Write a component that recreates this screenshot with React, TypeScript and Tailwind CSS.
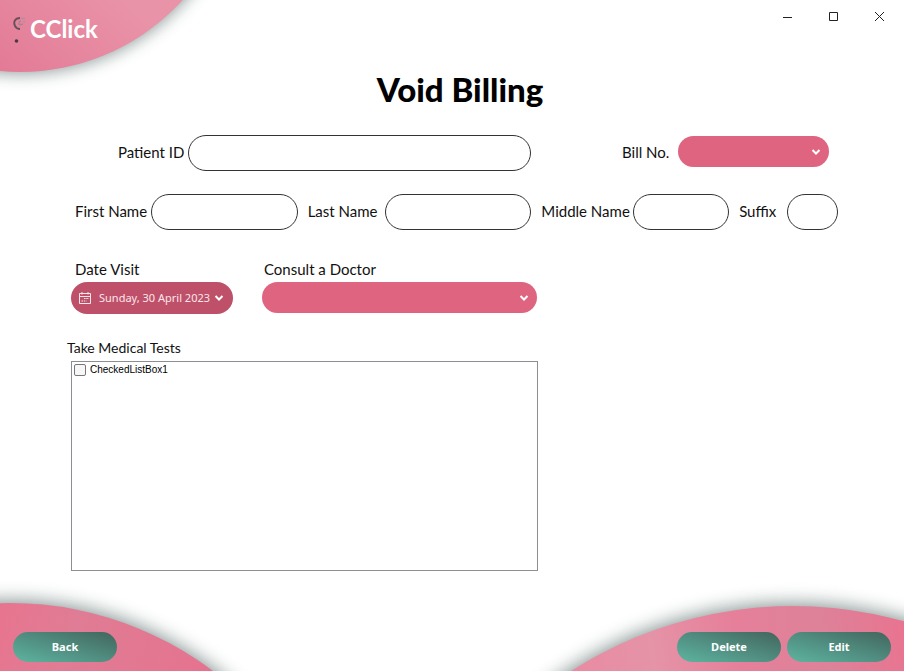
import React from "react";

const field =
  "block h-9 w-full rounded-full border border-[#333] bg-white px-3 text-[15px] outline-none";
const rowLabel = "shrink-0 whitespace-nowrap text-[15px] leading-[34px]";
const topLabel = "mb-0.5 block whitespace-nowrap text-[15px] leading-[22px]";

function Chevron({ className = "" }: { className?: string }) {
  return (
    <svg
      className={className}
      width="10"
      height="8"
      viewBox="0 0 10 8"
      fill="none"
      stroke="white"
      strokeWidth="2"
      aria-hidden="true"
    >
      <path d="M1.5 2 L5 5.5 L8.5 2" />
    </svg>
  );
}

function TextField({ id, className }: { id: string; className: string }) {
  return (
    <div className={`w-0 min-w-0 ${className}`}>
      <input id={id} type="text" className={field} />
    </div>
  );
}

function PinkSelect({ id, className }: { id: string; className: string }) {
  return (
    <div className={`relative min-w-0 ${className}`}>
      <select
        id={id}
        className="block h-[31px] w-full appearance-none rounded-full bg-[#de6480] px-4 text-sm text-white outline-none"
      />
      <Chevron className="pointer-events-none absolute right-2 top-3" />
    </div>
  );
}

function Decorations() {
  return (
    <>
      <svg
        className="pointer-events-none absolute left-0 top-0"
        width="280"
        height="140"
        aria-hidden="true"
      >
        <defs>
          <linearGradient id="topPink" gradientUnits="userSpaceOnUse" x1="0" y1="72" x2="90" y2="-30">
            <stop offset="0" stopColor="#e37a96" />
            <stop offset="1" stopColor="#e993a8" />
          </linearGradient>
          <filter id="softTop" x="-20%" y="-20%" width="140%" height="140%">
            <feGaussianBlur stdDeviation="8" />
          </filter>
        </defs>
        <circle cx="20" cy="-147" r="221" fill="#4d625e" opacity="0.6" filter="url(#softTop)" />
        <circle cx="20" cy="-148" r="220" fill="url(#topPink)" />
      </svg>
      <svg
        className="pointer-events-none absolute bottom-0 left-0"
        width="280"
        height="120"
        viewBox="0 551 280 120"
        aria-hidden="true"
      >
        <defs>
          <linearGradient
            id="leftPink"
            gradientUnits="userSpaceOnUse"
            x1="0"
            y1="600"
            x2="210"
            y2="671"
          >
            <stop offset="0" stopColor="#e8748f" />
            <stop offset="0.35" stopColor="#e07c95" />
            <stop offset="1" stopColor="#e5738f" />
          </linearGradient>
          <filter id="softLeft" x="-20%" y="-20%" width="140%" height="140%">
            <feGaussianBlur stdDeviation="9" />
          </filter>
        </defs>
        <circle cx="10" cy="938" r="338" fill="#4d625e" opacity="0.65" filter="url(#softLeft)" />
        <circle cx="10" cy="940" r="337" fill="url(#leftPink)" />
      </svg>
      <svg
        className="pointer-events-none absolute bottom-0 right-0"
        width="400"
        height="120"
        viewBox="504 551 400 120"
        aria-hidden="true"
      >
        <defs>
          <linearGradient
            id="rightPink"
            gradientUnits="userSpaceOnUse"
            x1="570"
            y1="671"
            x2="904"
            y2="606"
          >
            <stop offset="0" stopColor="#e98ba2" />
            <stop offset="0.25" stopColor="#e593a7" />
            <stop offset="0.5" stopColor="#e67f9a" />
            <stop offset="0.75" stopColor="#dd8299" />
            <stop offset="1" stopColor="#e97390" />
          </linearGradient>
          <filter id="softRight" x="-20%" y="-20%" width="140%" height="140%">
            <feGaussianBlur stdDeviation="9" />
          </filter>
        </defs>
        <circle cx="793" cy="1015" r="412" fill="#4d625e" opacity="0.65" filter="url(#softRight)" />
        <circle cx="793" cy="1017" r="411" fill="url(#rightPink)" />
      </svg>
    </>
  );
}

function WindowButton({ label, children }: { label: string; children: React.ReactNode }) {
  return (
    <button type="button" aria-label={label} className="flex h-8 w-[46px] items-center justify-center">
      <svg
        width="11"
        height="11"
        viewBox="0 0 11 11"
        fill="none"
        stroke="#222"
        strokeWidth="1"
        aria-hidden="true"
      >
        {children}
      </svg>
    </button>
  );
}

function ActionButton({ children }: { children: React.ReactNode }) {
  return (
    <button
      type="button"
      className="h-[30px] w-[104px] rounded-full bg-linear-to-tr from-[#5db5a0] via-[#508d80] to-[#42655d] font-['Noto_Sans',sans-serif] text-[11px] font-bold text-white"
    >
      {children}
    </button>
  );
}

export default function App() {
  return (
    <div className="relative flex min-h-screen flex-col overflow-hidden bg-white font-['Lato',sans-serif] text-[#111]">
      <Decorations />

      <header className="relative flex items-start justify-between pr-0.5">
        <div className="flex items-center gap-1 pl-3 pt-[13px]">
          <svg width="14" height="28" viewBox="0 0 14 28" fill="none" aria-hidden="true">
            <path d="M8 3 C3 3 1 7 3 11 C4 13 6 14 8 14" stroke="#67505a" strokeWidth="1.8" />
            <path d="M9 6 C7 6 6 9 8 10 L11 9" stroke="#a68790" strokeWidth="1.4" />
            <path d="M9 3 L13 4 M12 6 L12 8" stroke="#b98e9b" strokeWidth="1.6" />
            <circle cx="4.500" cy="26" r="1.800" fill="#4b3940" />
          </svg>
          <span className="text-2xl font-bold leading-8 text-white">CClick</span>
        </div>
        <div className="flex">
          <WindowButton label="Minimize">
            <path d="M1 6.500 H10" />
          </WindowButton>
          <WindowButton label="Maximize">
            <path d="M1.500 1.500 H9.500 V9.500 H1.500 Z" />
          </WindowButton>
          <WindowButton label="Close">
            <path d="M1 1 L10 10 M10 1 L1 10" />
          </WindowButton>
        </div>
      </header>

      <main className="relative flex grow flex-col pt-6">
        <h1 className="pl-4 text-center text-[33px] font-black leading-10 text-black">
          Void Billing
        </h1>

        <form className="flex flex-col pl-[71px] pr-[66px] pt-[26px]">
          <div className="flex items-start pl-[47px] pr-[9px]">
            <label htmlFor="patient" className={`${rowLabel} w-[70px]`}>
              Patient ID
            </label>
            <TextField id="patient" className="grow-[343]" />
            <label htmlFor="bill" className={`${rowLabel} ml-[91px] w-14`}>
              Bill No.
            </label>
            <PinkSelect id="bill" className="mt-px w-0 grow-[151]" />
          </div>

          <div className="mt-[23px] flex items-start pl-1">
            <label htmlFor="first" className={`${rowLabel} w-[76px]`}>
              First Name
            </label>
            <TextField id="first" className="grow-[147]" />
            <label htmlFor="last" className={`${rowLabel} ml-2.5 w-[77px]`}>
              Last Name
            </label>
            <TextField id="last" className="grow-[147]" />
            <label htmlFor="middle" className={`${rowLabel} ml-2.5 w-[92px]`}>
              Middle Name
            </label>
            <TextField id="middle" className="grow-[96]" />
            <label htmlFor="suffix" className={`${rowLabel} ml-2.5 w-12`}>
              Suffix
            </label>
            <TextField id="suffix" className="grow-[51]" />
          </div>

          <div className="mt-7 flex gap-[29px]">
            <div>
              <label htmlFor="visit" className={`${topLabel} pl-1`}>
                Date Visit
              </label>
              <button
                id="visit"
                type="button"
                className="flex h-8 w-[162px] items-center rounded-full bg-[#bf5069] pl-2 font-['Noto_Sans',sans-serif] text-[11px] text-[#fbe6eb]"
              >
                <svg
                  width="12"
                  height="12"
                  viewBox="0 0 12 12"
                  fill="none"
                  stroke="currentColor"
                  aria-hidden="true"
                >
                  <path d="M0.500 1.500 H11.500 V11.500 H0.500 Z M0.500 4.500 H11.500 M3 0 V2.500 M9 0 V2.500" />
                  <path d="M5 6.500 H10 M2.500 9 H7.500" strokeDasharray="1.500 0.800" />
                </svg>
                <span className="ml-2 whitespace-nowrap">Sunday, 30 April 2023</span>
                <Chevron className="ml-1 shrink-0" />
              </button>
            </div>
            <div className="w-[275px]">
              <label htmlFor="doctor" className={`${topLabel} pl-0.5`}>
                Consult a Doctor
              </label>
              <PinkSelect id="doctor" className="w-full" />
            </div>
          </div>

          <fieldset className="mt-[23px] min-w-0">
            <legend className="-ml-1 mb-0.5 block whitespace-nowrap text-sm leading-[22px]">
              Take Medical Tests
            </legend>
            <div className="h-[210px] w-[467px] border border-[#8b8f94] bg-white">
              <label className="flex items-center gap-1 pl-0.5 pt-0.5 font-['Liberation_Sans',Arial,sans-serif] text-[10px] leading-3 text-black">
                <input
                  type="checkbox"
                  className="size-3 appearance-none rounded-[2px] border border-[#777] bg-[#f7f7f7] checked:bg-[#de6480]"
                />
                CheckedListBox1
              </label>
            </div>
          </fieldset>
        </form>
      </main>

      <footer className="relative flex items-center gap-1.5 px-[13px] pb-[9px]">
        <ActionButton>Back</ActionButton>
        <div className="grow" />
        <ActionButton>Delete</ActionButton>
        <ActionButton>Edit</ActionButton>
      </footer>
    </div>
  );
}
